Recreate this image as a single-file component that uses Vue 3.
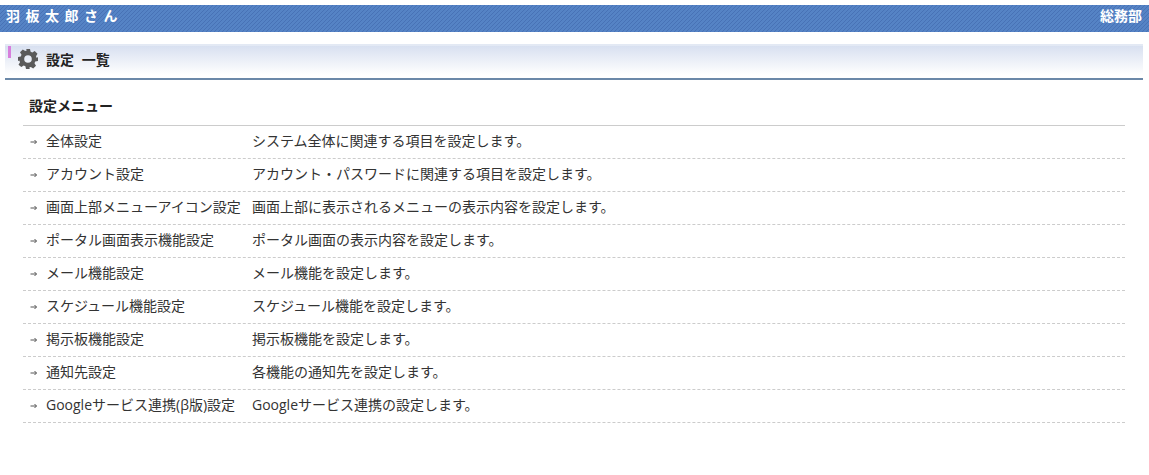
<script setup>
const rows = [
  ['全体設定', 'システム全体に関連する項目を設定します。'],
  ['アカウント設定', 'アカウント・パスワードに関連する項目を設定します。'],
  ['画面上部メニューアイコン設定', '画面上部に表示されるメニューの表示内容を設定します。'],
  ['ポータル画面表示機能設定', 'ポータル画面の表示内容を設定します。'],
  ['メール機能設定', 'メール機能を設定します。'],
  ['スケジュール機能設定', 'スケジュール機能を設定します。'],
  ['掲示板機能設定', '掲示板機能を設定します。'],
  ['通知先設定', '各機能の通知先を設定します。'],
  ['Googleサービス連携(β版)設定', 'Googleサービス連携の設定します。'],
]
</script>

<template>
  <div class="page">
    <div class="userbar">
      <span class="name">羽板太郎さん</span>
      <span class="dept">総務部</span>
    </div>
    <div class="heading">
      <i class="tick"></i>
      <svg class="gear" viewBox="0 0 20 20" width="20" height="20">
        <path fill="#5a5a5a" fill-rule="evenodd" d="M8 0h4l.6 2.800 1.700.7 2.400-1.500 2.800 2.800-1.500 2.400.7 1.700L20 8v4l-2.800.6-.7 1.700 1.500 2.400-2.800 2.800-2.400-1.500-1.700.7L12 20H8l-.6-2.800-1.700-.7-2.400 1.500L.5 15.700 2 13.300l-.7-1.700L0 12V8l2.800-.6.700-1.700L2 3.300 4.800.5l2.400 1.500 1.700-.7zM10 6.200a3.800 3.800 0 1 0 0 7.600 3.800 3.800 0 0 0 0-7.600z"/>
      </svg>
      <span class="title">設定 一覧</span>
    </div>
    <div class="content">
      <div class="section">設定メニュー</div>
      <div class="list">
        <div v-for="r in rows" :key="r[0]" class="row">
          <span class="arrow">
            <svg viewBox="0 0 8 8" width="8" height="8"><path d="M.5 4h6M4.500 2l2 2-2 2" fill="none" stroke="#555" stroke-width="1"/></svg>
          </span>
          <span class="label">{{ r[0] }}</span>
          <span class="desc">{{ r[1] }}</span>
        </div>
      </div>
    </div>
  </div>
</template>

<style scoped>
.page {
  width: 1149px;
  height: 475px;
  overflow: hidden;
  background: #fff;
  padding-top: 5px;
  box-sizing: border-box;
  font-family: "Open Sans", "Noto Sans CJK JP", sans-serif;
  font-size: 14px;
  color: #333;
}
.userbar {
  height: 27px;
  display: flex;
  align-items: center;
  justify-content: space-between;
  padding: 0 7px 0 6px;
  color: #fff;
  font-weight: 700;
  background-color: #4e7bbf;
  background-image: repeating-linear-gradient(135deg, #4872b6 0, #4872b6 1.41px, #5583c5 1.41px, #5583c5 2.83px);
  background-size: 4px 4px;
}
.name { font-size: 14px; letter-spacing: 5.500px; line-height: 24px; padding-bottom: 5px; }
.dept { font-size: 14px; line-height: 24px; padding-bottom: 5px; }
.heading {
  position: relative;
  margin: 12px 6px 0 5px;
  height: 36px;
  box-sizing: border-box;
  border-top: 2px solid #e3e9f4;
  border-bottom: 2px solid #6b88a8;
  background: linear-gradient(#d8e0f0, #fff 90%);
  display: flex;
  align-items: center;
  padding-left: 13px;
  padding-bottom: 6px;
}
.tick {
  position: absolute;
  left: 3px;
  top: 0;
  width: 3px;
  height: 12px;
  background: #d77fdc;
}
.gear { margin-right: 8px; }
.title { font-size: 14px; font-weight: 700; color: #222; word-spacing: 4px; }
.content { margin: 0 24px 0 23px; }
.section {
  height: 46px;
  padding: 17px 0 0 6px;
  box-sizing: border-box;
  font-size: 14px;
  line-height: 18px;
  font-weight: 700;
  color: #222;
  border-bottom: 1px solid #ccc;
}
.row {
  height: 33px;
  box-sizing: border-box;
  display: flex;
  align-items: center;
  padding-bottom: 5px;
  border-bottom: 1px dashed #ccc;
}
.arrow { width: 23px; padding-left: 7px; padding-top: 4px; box-sizing: border-box; display: flex; }
.label { width: 206px; flex: none; white-space: nowrap; }
.desc { white-space: nowrap; }
</style>
